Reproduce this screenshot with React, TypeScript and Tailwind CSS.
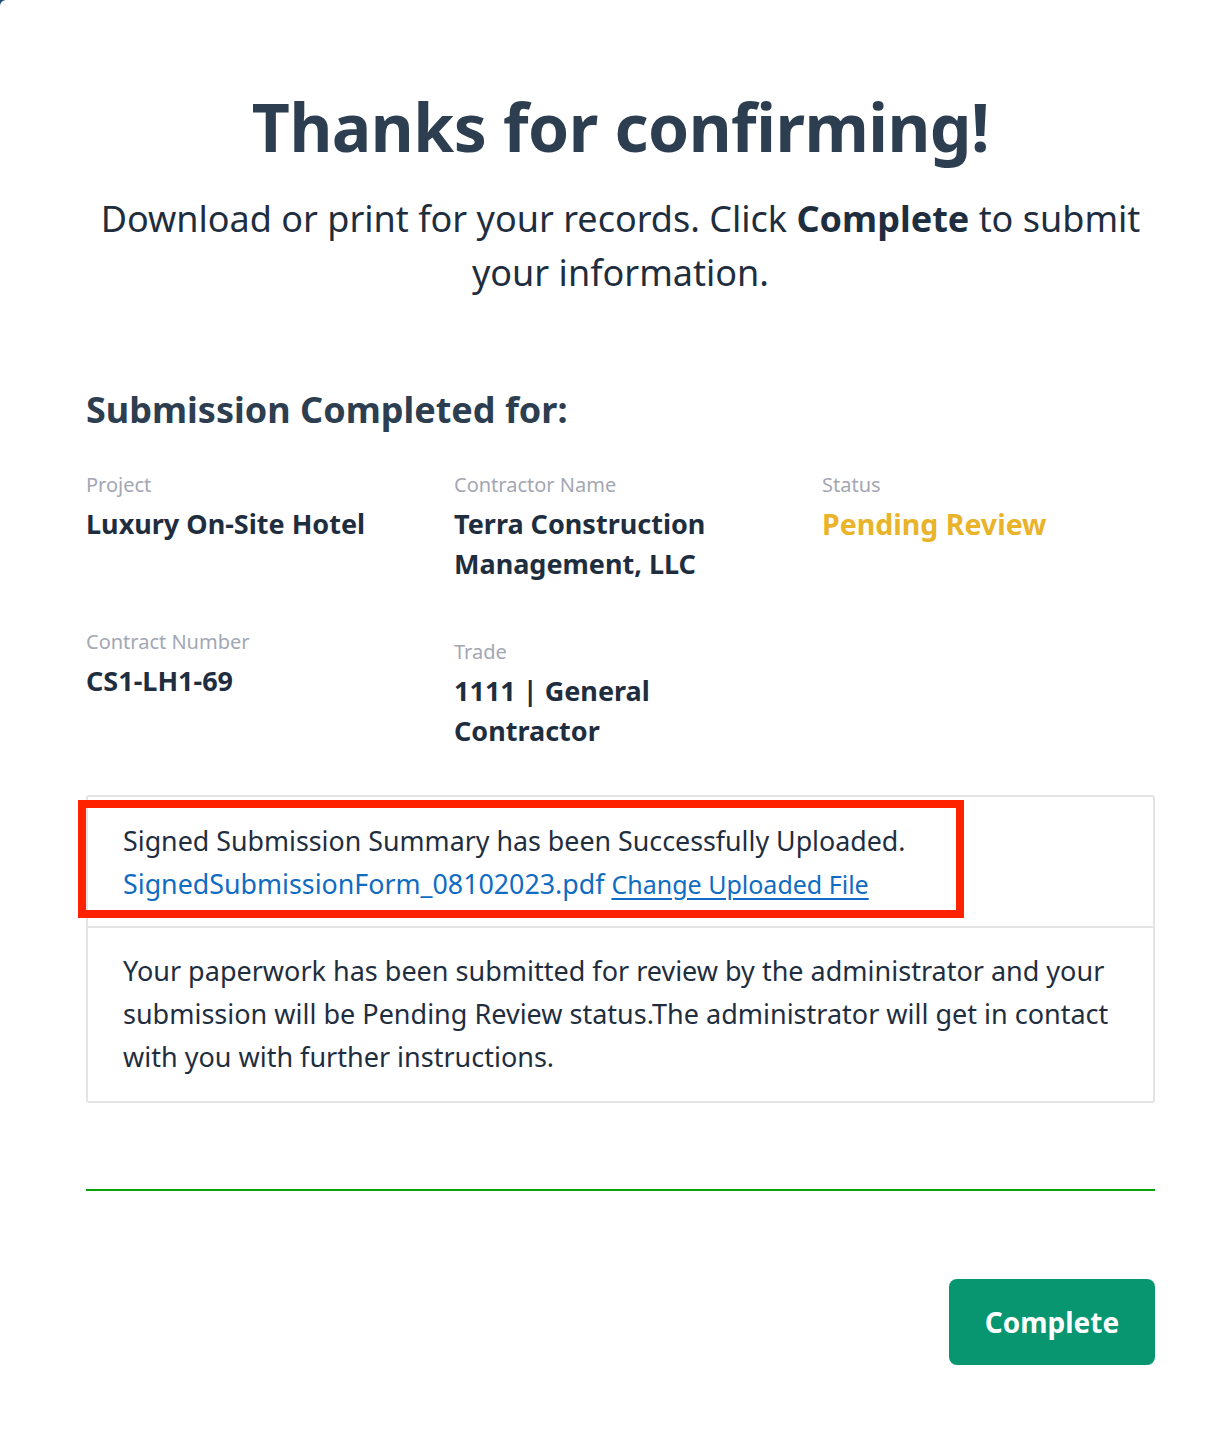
const FONT = { fontFamily: '"Noto Sans", "Open Sans", sans-serif' }

interface Field {
  label: string
  value: string
  tone?: 'status'
  offset?: boolean
}

const ROW_ONE: Field[] = [
  { label: 'Project', value: 'Luxury On-Site Hotel' },
  { label: 'Contractor Name', value: 'Terra Construction Management, LLC' },
  { label: 'Status', value: 'Pending Review', tone: 'status' },
]

const ROW_TWO: Field[] = [
  { label: 'Contract Number', value: 'CS1-LH1-69' },
  { label: 'Trade', value: '1111 | General Contractor', offset: true },
]

function InfoCell({ field }: { field: Field }) {
  return (
    <div className={field.offset ? 'pt-[10px]' : ''}>
      <div className="text-[20px] leading-[28px] text-[#a3a7b3]">{field.label}</div>
      {field.tone === 'status' ? (
        <div className="mt-[5px] text-[28.5px] leading-[40px] font-bold text-[#e9b32a]">{field.value}</div>
      ) : (
        <div className="mt-[5px] pr-6 text-[27px] leading-[40px] font-bold text-[#1f2e3f]">{field.value}</div>
      )}
    </div>
  )
}

export default function App() {
  return (
    <div className="bg-[#1e4f6e]" style={FONT}>
      <div className="min-h-[1440px] bg-white rounded-tl-[6px] pl-[86px] pr-[74px] pt-[84px] text-[#2c3e50]">
        <h1 className="text-center text-[66px] leading-[84px] font-bold tracking-[-0.5px] text-[#2c3e50]">
          Thanks for confirming!
        </h1>
        <p className="mt-[24px] text-center text-[36px] leading-[54px] text-[#1f2e3f]">
          Download or print for your records. Click <span className="font-bold">Complete</span> to submit your information.
        </p>

        <h2 className="mt-[85px] text-[36px] leading-[50px] font-bold text-[#2c3e50]">Submission Completed for:</h2>

        <div className="mt-[36px] grid grid-cols-3 gap-x-[35px]">
          {ROW_ONE.map((f) => (
            <InfoCell key={f.label} field={f} />
          ))}
        </div>
        <div className="mt-[44px] grid grid-cols-3 gap-x-[35px]">
          {ROW_TWO.map((f) => (
            <InfoCell key={f.label} field={f} />
          ))}
        </div>

        {/* Upload confirmation + review notice */}
        <div className="relative mt-[44px] border-2 border-[#e4e4e4] rounded-[3px] text-[27px] text-[#1f2e3f]">
          <div className="px-[35px] pt-[22px] pb-[20px] leading-[43px] text-[26.8px]">
            <div>Signed Submission Summary has been Successfully Uploaded.</div>
            <div>
              <span className="text-[#0f6cc2]">SignedSubmissionForm_08102023.pdf</span>{' '}
              <a className="text-[#0f6cc2] text-[25px] underline underline-offset-4">Change Uploaded File</a>
            </div>
          </div>
          <div className="border-t-2 border-[#e4e4e4] px-[35px] pt-[21px] pb-[23px] leading-[43px]">
            Your paperwork has been submitted for review by the administrator and your submission will be Pending Review status.The administrator will get in contact with you with further instructions.
          </div>

          {/* annotation highlight */}
          <div className="absolute left-[-10px] top-[3px] w-[886px] h-[118px] border-[8px] border-[#ff2200]" />
        </div>

        <div className="mt-[86px] h-[2px] bg-[#0aa00a]" />

        <div className="mt-[88px] flex justify-end">
          <button className="w-[206px] h-[86px] rounded-[8px] bg-[#079670] text-white text-[28px] font-bold">
            Complete
          </button>
        </div>
      </div>
    </div>
  )
}
